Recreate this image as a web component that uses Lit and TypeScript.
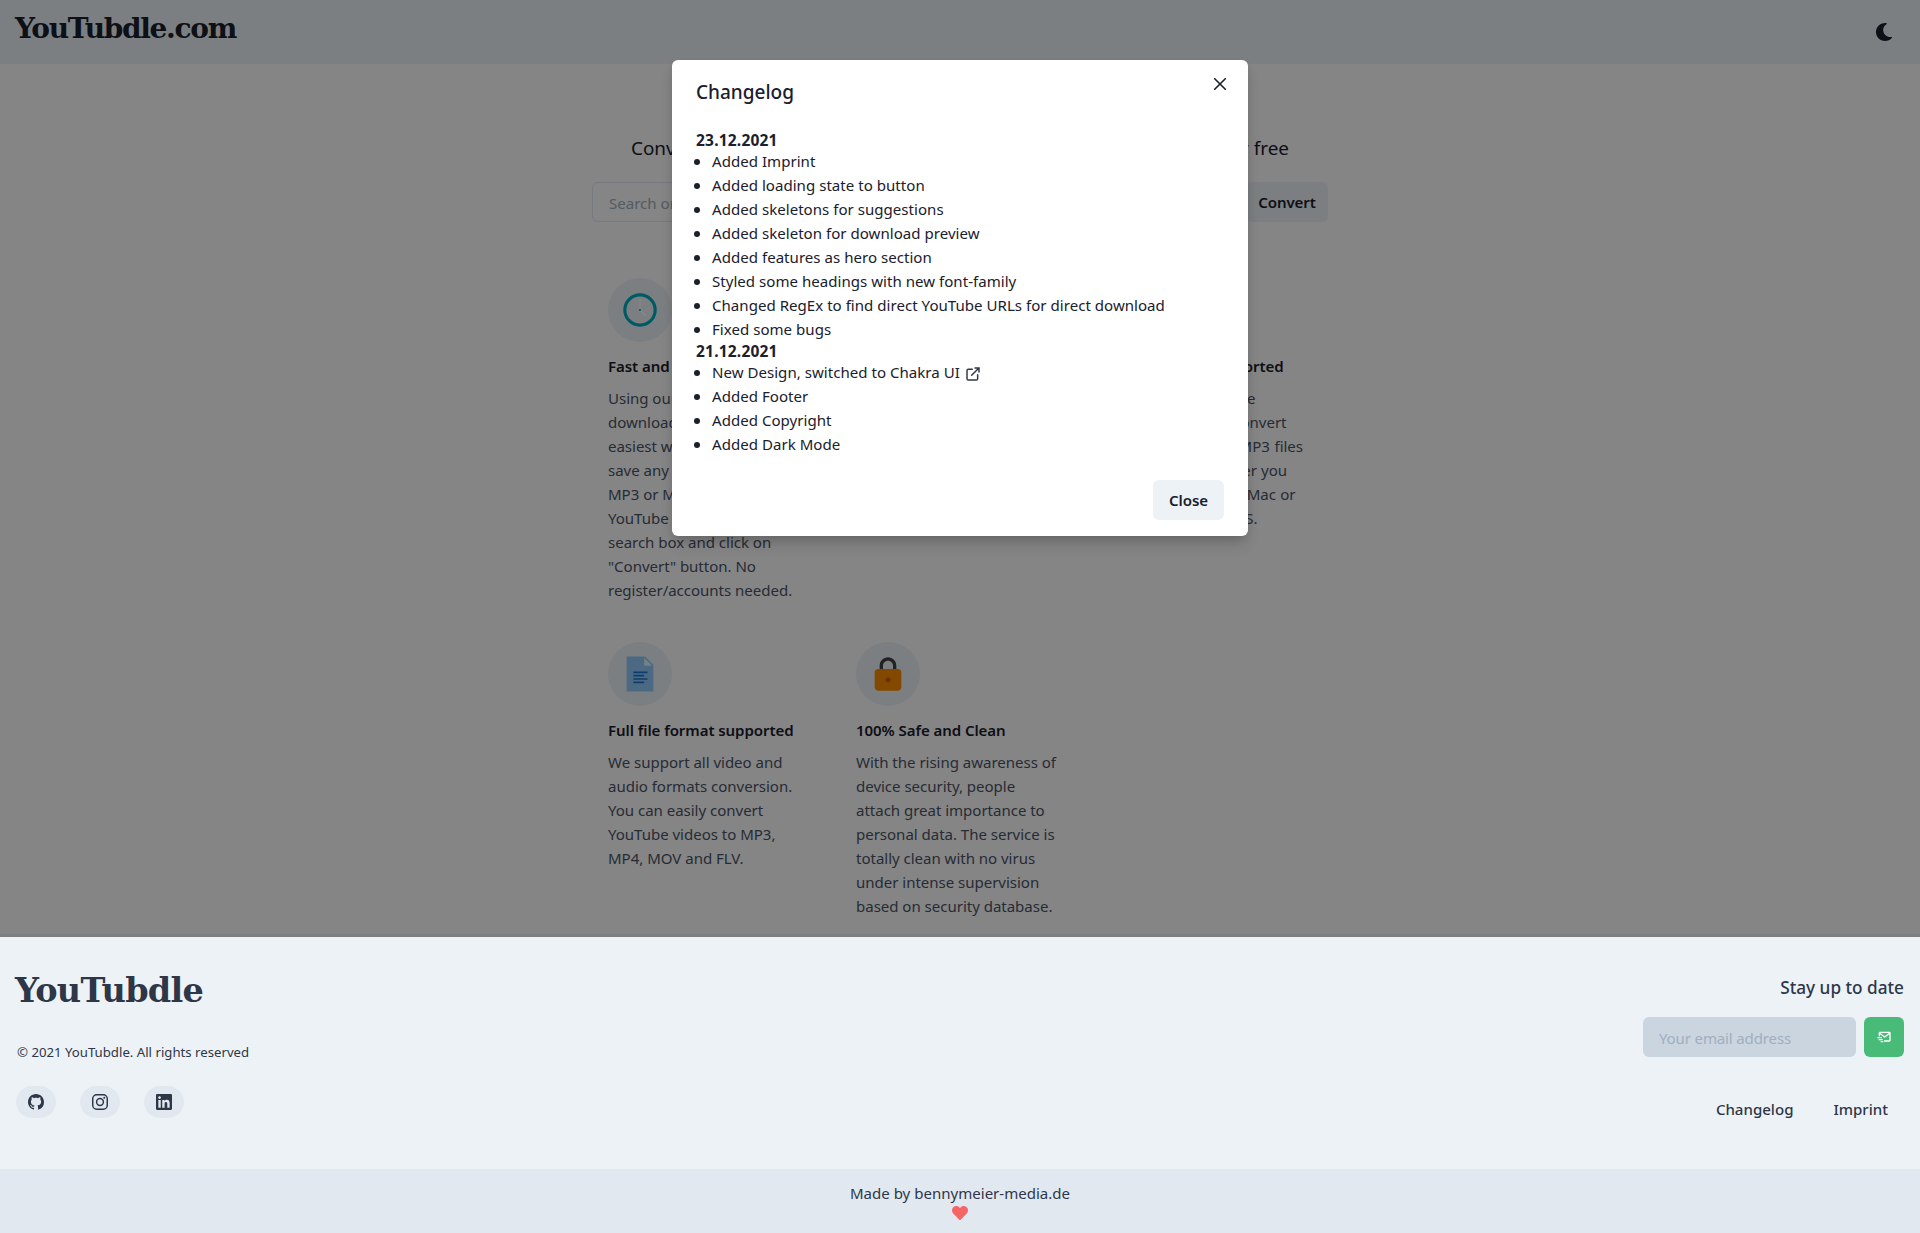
import { LitElement, html, css, svg, TemplateResult } from "lit";
import { customElement, state } from "lit/decorators.js";

interface Feature {
  icon: TemplateResult;
  title: string;
  titleWidth?: number;
  /* Each line of copy, optionally with the measure it is set to. */
  lines: { text: string; width?: number }[];
}

const plain = (...lines: string[]) => lines.map((text) => ({ text }));

const clockIcon = svg`
  <circle cx="24" cy="24" r="18.200" fill="none" stroke="#00acc1" stroke-width="3.800"></circle>
  <rect x="23.200" y="11" width="1.800" height="13" fill="#fff"></rect>
  <path d="M24 24l7 7" stroke="#fff" stroke-width="2.200"></path>
  <circle cx="24" cy="24" r="1.300" fill="#00acc1"></circle>`;

const documentIcon = svg`
  <path fill="#90caf9" d="M40 45H8V3h22l10 10z"></path>
  <path fill="#e1f5fe" d="M38.5 14H29V4.5z"></path>
  <path fill="#1976d2" d="M16 21h17v2H16zM16 25h13v2H16zM16 29h17v2H16zM16 33h13v2H16z"></path>`;

const lockIcon = svg`
  <path fill="#424242" d="M24 4c-5.5 0-10 4.500-10 10v4h4v-4c0-3.300 2.700-6 6-6s6 2.700 6 6v4h4v-4c0-5.500-4.500-10-10-10z"></path>
  <path fill="#fb8c00" d="M36 44H12c-2.200 0-4-1.800-4-4V22c0-2.200 1.800-4 4-4h24c2.200 0 4 1.800 4 4v18c0 2.200-1.800 4-4 4z"></path>
  <circle fill="#c76000" cx="24" cy="31" r="3"></circle>`;

const FEATURES: Feature[] = [
  {
    icon: clockIcon,
    title: "Fast and Easy to use",
    lines: plain(
      "Using our YouTube",
      "downloader is the",
      "easiest way to convert",
      "save any video to",
      "MP3 or MP4. Paste the",
      "YouTube URL in the",
      "search box and click on",
      '"Convert" button. No',
      "register/accounts needed."
    ),
  },
  {
    icon: documentIcon,
    title: "Unlimited Conversion",
    lines: plain("Convert as many videos", "as you like, with no", "limits and always free."),
  },
  {
    icon: clockIcon,
    title: "All platforms supported",
    titleWidth: 179.5,
    lines: [
      { text: "Use it on any device", width: 151.5 },
      { text: "anytime. You can convert", width: 182.5 },
      { text: "YouTube videos to MP3 files", width: 199 },
      { text: "for free now, whether you", width: 183 },
      { text: "are using Windows, Mac or", width: 191.5 },
      { text: "Linux, Android or iOS.", width: 153.5 },
    ],
  },
  {
    icon: documentIcon,
    title: "Full file format supported",
    lines: plain(
      "We support all video and",
      "audio formats conversion.",
      "You can easily convert",
      "YouTube videos to MP3,",
      "MP4, MOV and FLV."
    ),
  },
  {
    icon: lockIcon,
    title: "100% Safe and Clean",
    lines: plain(
      "With the rising awareness of",
      "device security, people",
      "attach great importance to",
      "personal data. The service is",
      "totally clean with no virus",
      "under intense supervision",
      "based on security database."
    ),
  },
];

const externalLink = html`<svg class="external" viewBox="0 0 24 24" fill="none" stroke="currentColor" stroke-width="2.200" stroke-linecap="round">
  <path d="M15 3h6v6M10 14L20.500 3.500M11 5H5a2 2 0 0 0-2 2v12a2 2 0 0 0 2 2h12a2 2 0 0 0 2-2v-6"></path>
</svg>`;

const CHANGES: { date: string; entries: { text: string; link?: boolean }[] }[] = [
  {
    date: "23.12.2021",
    entries: plain(
      "Added Imprint",
      "Added loading state to button",
      "Added skeletons for suggestions",
      "Added skeleton for download preview",
      "Added features as hero section",
      "Styled some headings with new font-family",
      "Changed RegEx to find direct YouTube URLs for direct download",
      "Fixed some bugs"
    ),
  },
  {
    date: "21.12.2021",
    entries: [
      { text: "New Design, switched to Chakra UI", link: true },
      ...plain("Added Footer", "Added Copyright", "Added Dark Mode"),
    ],
  },
];

const base = css`
  * {
    box-sizing: border-box;
  }
  svg {
    display: block;
    flex: none;
  }
  button {
    font: inherit;
    color: inherit;
    border: 0;
    padding: 0;
    margin: 0;
    background: none;
  }
  input {
    font: inherit;
    min-width: 0;
    margin: 0;
    outline: none;
  }
`;

@customElement("changelog-modal")
class ChangelogModal extends LitElement {
  static styles = [
    base,
    css`
      :host {
        display: block;
        width: 576px;
        background: #fff;
        border-radius: 6px;
        box-shadow: 0 10px 15px -3px rgba(0, 0, 0, 0.16), 0 4px 8px -2px rgba(0, 0, 0, 0.12);
        color: #1a202c;
      }
      header {
        display: flex;
        justify-content: space-between;
        padding: 16px 20px 16px 24px;
      }
      h2 {
        margin: 0;
        height: 30px;
        padding-top: 1px;
        font-size: 19px;
        font-weight: 500;
        line-height: 30px;
      }
      .dismiss {
        width: 16px;
        height: 16px;
        display: grid;
        place-items: center;
      }
      .body {
        padding: 8px 24px;
      }
      h3 {
        margin: 0;
        height: 19.200px;
        padding-top: 1px;
        font-size: 15.500px;
        line-height: 19.200px;
        letter-spacing: 0.2px;
      }
      ul {
        list-style: none;
        margin: 0;
        padding: 0;
      }
      li {
        display: flex;
        align-items: center;
        line-height: 24px;
        white-space: nowrap;
        letter-spacing: 0.025px;
      }
      li::before {
        content: "";
        width: 6px;
        height: 6px;
        border-radius: 50%;
        background: currentColor;
        margin: 2px 12px 0 -2px;
      }
      .external {
        width: 16px;
        height: 16px;
        margin: 3px 0 0 5px;
        color: #2d3748;
      }
      footer {
        display: flex;
        justify-content: flex-end;
        padding: 16px 24px;
      }
      .close {
        width: 71px;
        height: 40px;
        border-radius: 6px;
        background: #edf2f7;
        font-weight: 600;
        letter-spacing: -0.1px;
      }
    `,
  ];

  render() {
    return html`
      <header>
        <h2>Changelog</h2>
        <button class="dismiss" aria-label="Close">
          <svg width="12" height="12" viewBox="0 0 12 12" stroke="#1a202c" stroke-width="1.600" stroke-linecap="round">
            <path d="M.7.7l10.600 10.600M11.300.7L.7 11.300"></path>
          </svg>
        </button>
      </header>
      <div class="body">
        ${CHANGES.map(
          (c) => html`<h3>${c.date}</h3>
            <ul>
              ${c.entries.map((e) => html`<li><span>${e.text}</span>${e.link ? externalLink : ""}</li>`)}
            </ul>`
        )}
      </div>
      <footer><button class="close">Close</button></footer>
    `;
  }
}

@customElement("feature-card")
class FeatureCard extends LitElement {
  static properties = { feature: { attribute: false } };
  declare feature: Feature;

  static styles = [
    base,
    css`
      :host {
        display: block;
        white-space: nowrap;
      }
      .badge {
        width: 64px;
        height: 64px;
        border-radius: 50%;
        background: #ecf4f8;
        display: grid;
        place-items: center;
        margin-bottom: 12px;
      }
      h3 {
        margin: 0 0 8px;
        font-size: inherit;
        font-weight: 600;
        line-height: 24px;
        letter-spacing: -0.080px;
        color: #1a202c;
      }
      .line {
        color: #4a5568;
        line-height: 24px;
        letter-spacing: -0.030px;
      }
      .set {
        text-align-last: justify;
      }
    `,
  ];

  private measure(width?: number) {
    return width ? `width:${width}px` : "";
  }

  render() {
    const f = this.feature;
    return html`
      <div class="badge"><svg width="40" height="40" viewBox="0 0 48 48">${f.icon}</svg></div>
      <h3 class=${f.titleWidth ? "set" : ""} style=${this.measure(f.titleWidth)}>${f.title}</h3>
      ${f.lines.map(
        (l) => html`<div class="line ${l.width ? "set" : ""}" style=${this.measure(l.width)}>${l.text}</div>`
      )}
    `;
  }
}

@customElement("site-footer")
class SiteFooter extends LitElement {
  static styles = [
    base,
    css`
      :host {
        display: block;
        color: #2d3748;
      }
      .main {
        display: flex;
        justify-content: space-between;
        height: 235px;
        padding: 32px 16px 0;
        background: #edf2f7;
      }
      .brand {
        font: 700 33.500px/50px "DejaVu Serif", serif;
        letter-spacing: -0.75px;
        margin-left: -1px;
      }
      .copy {
        margin: 26px 0 23px;
        font-size: 13.200px;
        line-height: 21px;
        padding-left: 1px;
      }
      .social {
        display: flex;
        gap: 24px;
      }
      .social button {
        width: 40px;
        height: 32px;
        border-radius: 16px;
        background: #e2e8f0;
        display: grid;
        place-items: center;
      }
      .right {
        display: flex;
        flex-direction: column;
        align-items: flex-end;
      }
      .stay {
        margin: 10px 0 17px;
        font-size: 17.200px;
        font-weight: 500;
        line-height: 24px;
      }
      form {
        display: flex;
        gap: 8px;
      }
      input {
        width: 213px;
        height: 40px;
        border: 0;
        border-radius: 6px;
        background: #cbd5e0;
        padding: 1px 16px 0;
        letter-spacing: -0.15px;
      }
      input::placeholder {
        color: #a0aec0;
      }
      .send {
        width: 40px;
        height: 40px;
        border-radius: 6px;
        background: #48bb78;
        display: grid;
        place-items: center;
      }
      nav {
        display: flex;
        gap: 9px;
        margin-top: 32px;
      }
      nav button {
        height: 40px;
        padding: 0 16px 0 15px;
        font-weight: 500;
      }
      .credit {
        height: 64px;
        background: #e2e8f0;
        display: flex;
        flex-direction: column;
        align-items: center;
        padding-top: 12px;
        line-height: 24px;
      }
    `,
  ];

  render() {
    return html`
      <div class="main">
        <div>
          <div class="brand">YouTubdle</div>
          <div class="copy">© 2021 YouTubdle. All rights reserved</div>
          <div class="social">
            <button aria-label="GitHub">
              <svg width="16" height="16" viewBox="0 0 16 16" fill="currentColor">
                <path d="M8 0C3.580 0 0 3.580 0 8c0 3.540 2.290 6.530 5.470 7.590.4.070.55-.17.55-.38 0-.19-.01-.82-.01-1.490-2.010.37-2.530-.49-2.690-.94-.09-.23-.48-.94-.82-1.130-.28-.15-.68-.52-.01-.53.63-.01 1.080.58 1.230.82.72 1.210 1.870.87 2.330.66.07-.52.28-.87.51-1.070-1.780-.2-3.640-.89-3.640-3.950 0-.87.31-1.590.82-2.150-.08-.2-.36-1.020.08-2.120 0 0 .67-.21 2.200.82.64-.18 1.320-.27 2-.27s1.360.09 2 .27c1.530-1.040 2.200-.82 2.200-.82.44 1.100.16 1.920.08 2.120.51.56.82 1.270.82 2.150 0 3.070-1.870 3.750-3.650 3.950.29.25.54.73.54 1.480 0 1.070-.01 1.930-.01 2.200 0 .21.15.46.55.38A8.013 8.013 0 0 0 16 8c0-4.420-3.580-8-8-8z"></path>
              </svg>
            </button>
            <button aria-label="Instagram">
              <svg width="16" height="16" viewBox="0 0 24 24" fill="none" stroke="currentColor" stroke-width="2.200">
                <rect x="1.100" y="1.100" width="21.800" height="21.800" rx="6"></rect>
                <circle cx="12" cy="12" r="5.100"></circle>
                <circle cx="18.400" cy="5.600" r="1.440" fill="currentColor" stroke="none"></circle>
              </svg>
            </button>
            <button aria-label="LinkedIn">
              <svg width="16" height="16" viewBox="0 0 24 24" fill="currentColor">
                <path d="M20.447 20.452h-3.554v-5.569c0-1.328-.027-3.037-1.852-3.037-1.853 0-2.136 1.445-2.136 2.939v5.667H9.351V9h3.414v1.561h.046c.477-.9 1.637-1.850 3.370-1.850 3.601 0 4.267 2.370 4.267 5.455v6.286zM5.337 7.433c-1.144 0-2.063-.926-2.063-2.065 0-1.138.92-2.063 2.063-2.063 1.140 0 2.064.925 2.064 2.063 0 1.139-.925 2.065-2.064 2.065zm1.782 13.019H3.555V9h3.564v11.452zM22.225 0H1.771C.792 0 0 .774 0 1.729v20.542C0 23.227.792 24 1.771 24h20.451C23.200 24 24 23.227 24 22.271V1.729C24 .774 23.200 0 22.222 0h.003z"></path>
              </svg>
            </button>
          </div>
        </div>
        <div class="right">
          <div class="stay">Stay up to date</div>
          <form>
            <input placeholder="Your email address" />
            <button class="send" type="button" aria-label="Subscribe">
              <svg width="16" height="16" viewBox="0 0 24 24" fill="#fff">
                <path d="M20 4H6c-1.103 0-2 .897-2 2v5h2V8l6.400 4.800c.178.133.389.2.6.2s.422-.067.6-.2L20 8v9h-8v2h8c1.103 0 2-.897 2-2V6c0-1.103-.897-2-2-2zm-7 6.750L6.666 6h12.668L13 10.750z"></path>
                <path d="M2 12h7v2H2zM4 15h6v2H4zM7 18h4v2H7z"></path>
              </svg>
            </button>
          </form>
          <nav><button>Changelog</button><button>Imprint</button></nav>
        </div>
      </div>
      <div class="credit">
        <div>Made by bennymeier-media.de</div>
        <svg width="16" height="16" viewBox="0 0 512 512" fill="#f56565">
          <path d="M462.300 62.600C407.500 15.900 326 24.300 275.700 76.200L256 96.500l-19.700-20.300C186.100 24.300 104.500 15.900 49.700 62.600c-62.800 53.600-66.100 149.800-9.900 207.900l193.500 199.800c12.500 12.900 32.800 12.900 45.300 0l193.500-199.800c56.300-58.100 53-154.300-9.800-207.900z"></path>
        </svg>
      </div>
    `;
  }
}

@customElement("app-root")
class AppRoot extends LitElement {
  @state() private changelogOpen = true;

  static styles = [
    base,
    css`
      :host {
        display: block;
        position: relative;
        height: 1233px;
        overflow: hidden;
        background: #fff;
        color: #1a202c;
        font: 15.050px/24px "Noto Sans", "Open Sans", sans-serif;
      }
      .top {
        display: flex;
        justify-content: space-between;
        height: 64px;
        padding: 0 27px 0 15px;
        background: #ecf4f8;
      }
      .logo {
        font: 700 28px/58px "DejaVu Serif", serif;
        letter-spacing: -1.300px;
      }
      .moon {
        margin-top: 23px;
        width: 18px;
        height: 18px;
      }
      main {
        width: 736px;
        height: 870px;
        margin: 0 auto;
        padding-top: 69px;
      }
      h1 {
        margin: 0 0 19px;
        font-size: 18.900px;
        font-weight: 400;
        line-height: 30px;
        display: flex;
        justify-content: space-between;
        padding: 0 39px 0 39px;
      }
      .search {
        display: flex;
        height: 40px;
        margin-bottom: 56px;
      }
      .search input {
        flex: 1;
        border: 1px solid #e2e8f0;
        border-radius: 6px 0 0 6px;
        padding: 1px 16px 0;
        background: none;
      }
      .search input::placeholder {
        color: #a0aec0;
      }
      .search button {
        width: 82px;
        border-radius: 6px;
        background: #ecf4f8;
        font-weight: 600;
        letter-spacing: -0.080px;
      }
      .features {
        display: grid;
        grid-template-columns: repeat(3, 208px);
        gap: 40px;
        padding: 0 16px;
      }
      .overlay {
        position: absolute;
        inset: 0 0 auto;
        height: 937px;
        background: rgba(0, 0, 0, 0.48);
        display: flex;
        justify-content: center;
        align-items: flex-start;
        padding-top: 60px;
      }
    `,
  ];

  render() {
    return html`
      <div class="top">
        <div class="logo">YouTubdle.com</div>
        <button class="moon" aria-label="Toggle dark mode">
          <svg width="18" height="18" viewBox="0 0 512 512" fill="#1a202c">
            <path d="M283.211 512c78.962 0 151.079-35.925 198.857-94.792 7.068-8.708-.639-21.430-11.562-19.350-124.203 23.654-238.262-71.576-238.262-196.954 0-72.222 38.662-138.635 101.498-174.394 9.686-5.512 7.250-20.197-3.756-22.230A258.156 258.156 0 0 0 283.211 0c-141.309 0-256 114.511-256 256 0 141.309 114.511 256 256 256z"></path>
          </svg>
        </button>
      </div>
      <main>
        <h1><span>Convert and download YouTube videos</span><span>as MP3 or MP4 for free</span></h1>
        <div class="search">
          <input placeholder="Search or paste YouTube link" />
          <button>Convert</button>
        </div>
        <div class="features">
          ${FEATURES.map((f) => html`<feature-card .feature=${f}></feature-card>`)}
        </div>
      </main>
      <site-footer></site-footer>
      ${this.changelogOpen ? html`<div class="overlay"><changelog-modal></changelog-modal></div>` : ""}
    `;
  }
}
